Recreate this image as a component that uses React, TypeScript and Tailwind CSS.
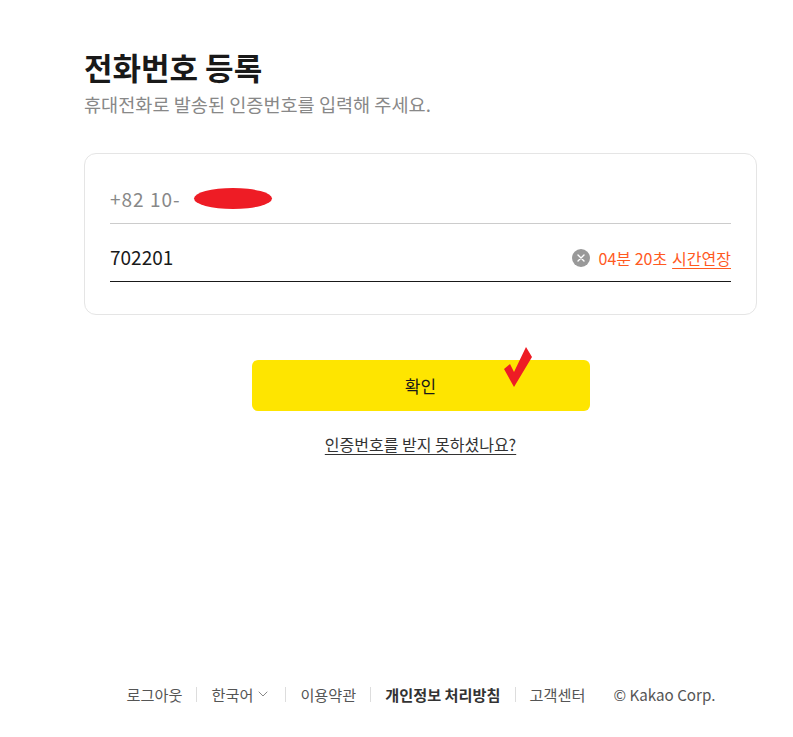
import React from 'react';
import { ChevronDown } from 'lucide-react';

const font = { fontFamily: '"Noto Sans CJK KR", "Noto Sans", sans-serif' };

export default function App() {
  const footerLinks = [
    { label: '로그아웃' },
    { label: '한국어', chevron: true },
    { label: '이용약관' },
    { label: '개인정보 처리방침', bold: true },
    { label: '고객센터' },
  ];

  return (
    <div className="min-h-[737px] bg-white text-[#191919]" style={font}>
      <div className="ml-[84px] w-[673px] pt-[47px]">
        {/* Heading */}
        <h1 className="text-[31px] font-bold leading-[40px]">전화번호 등록</h1>
        <p className="mt-[4px] text-[18.6px] leading-[26px] text-[#888]">
          휴대전화로 발송된 인증번호를 입력해 주세요.
        </p>

        {/* Card */}
        <div className="mt-[36px] rounded-[12px] border border-[#e5e5e5] px-[25px] pt-[22px] pb-[32px]">
          <div className="relative flex h-[48px] items-center border-b border-[#ccc] text-[19px] tracking-[1px] text-[#888]">
            <span>+82 10-</span>
            <span className="absolute left-[84px] top-[12px] h-[21px] w-[78px] rounded-[50%] bg-[#ee1c25]" />
          </div>
          <div className="mt-[10px] flex h-[48px] items-center border-b border-[#191919]">
            <span className="flex-1 text-[19px] text-[#191919]">702201</span>
            <span className="flex h-[18px] w-[18px] items-center justify-center rounded-full bg-[#999]">
              <svg width="8" height="8" viewBox="0 0 8 8">
                <path d="M1 1 L7 7 M7 1 L1 7" stroke="white" strokeWidth="1.4" strokeLinecap="round" />
              </svg>
            </span>
            <span className="ml-[9px] text-[16px] text-[#ff5a1f]">04분 20초</span>
            <span className="ml-[5px] text-[16px] text-[#ff5a1f] underline underline-offset-[3px]">시간연장</span>
          </div>
        </div>

        {/* Confirm */}
        <div className="flex flex-col items-center">
          <div className="relative mt-[45px]">
            <button className="h-[51px] w-[338px] rounded-[6px] bg-[#fee500] text-[17px] text-[#191919]">
              확인
            </button>
            <svg className="absolute left-[252px] top-[-13px]" width="28" height="42" viewBox="0 0 28 42">
              <path d="M0 22 L6 17 L10 25 L22 0 L28 10 L10 40 Z" fill="#ee1c25" />
            </svg>
          </div>
          <a className="mt-[23px] text-[16px] leading-[20px] text-[#333] underline underline-offset-[3px]">
            인증번호를 받지 못하셨나요?
          </a>
        </div>
      </div>

      {/* Footer */}
      <footer className="mt-[230px] flex items-center justify-center pl-[49px] text-[15.2px] leading-[20px] text-[#555]">
        {footerLinks.map((l, i) => (
          <React.Fragment key={l.label}>
            {i > 0 && <span className="mx-[14px] h-[15px] w-px bg-[#ddd]" />}
            <span className={`flex items-center ${l.bold ? 'font-bold text-[#333]' : ''}`}>
              {l.label}
              {l.chevron && <ChevronDown className="ml-[2px] h-[16px] w-[16px] text-[#888]" strokeWidth={1.5} />}
            </span>
          </React.Fragment>
        ))}
        <span className="ml-[28px]">© Kakao Corp.</span>
      </footer>
    </div>
  );
}
